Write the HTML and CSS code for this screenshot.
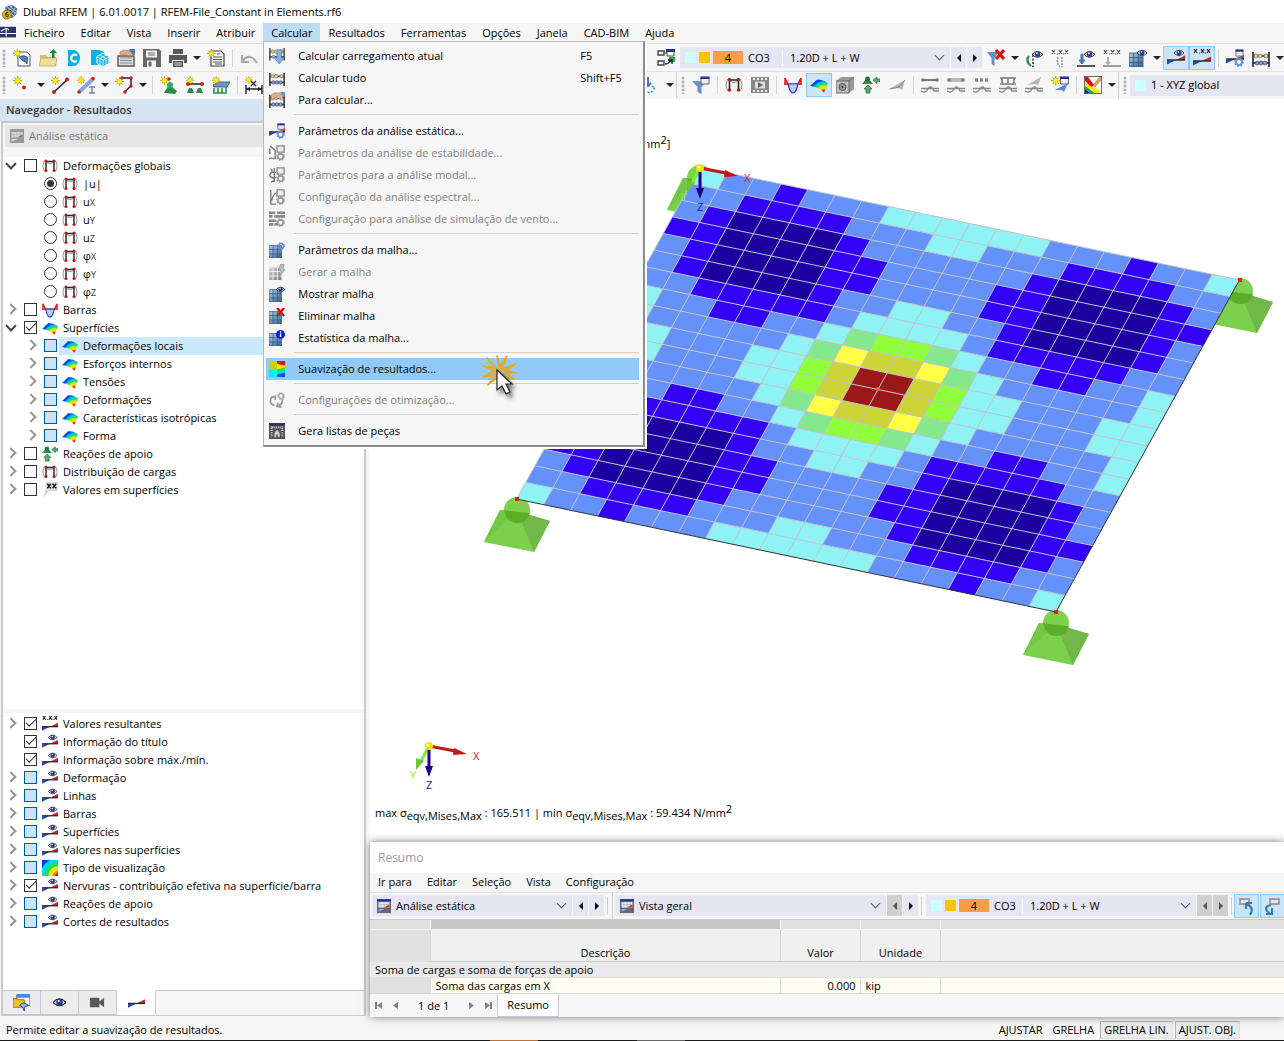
FILE: index.html
```html
<!DOCTYPE html>
<html lang="pt">
<head>
<meta charset="utf-8">
<title>Dlubal RFEM</title>
<link rel="stylesheet" href="styles.css">
</head>
<body>
<svg class="defs" aria-hidden="true">
  <defs>
    <linearGradient id="gSteel" x1="0" y1="0" x2="1" y2="1"><stop offset="0" stop-color="#a8d4ee"/><stop offset="1" stop-color="#3a5c8c"/></linearGradient>
    <linearGradient id="gGrey" x1="0" y1="0" x2="1" y2="1"><stop offset="0" stop-color="#d4d4d4"/><stop offset="1" stop-color="#808080"/></linearGradient>
    <radialGradient id="gRain" gradientUnits="userSpaceOnUse" cx="14" cy="17" r="16"><stop offset="0" stop-color="#d01000"/><stop offset=".15" stop-color="#f02000"/><stop offset=".3" stop-color="#ffe000"/><stop offset=".45" stop-color="#c0f000"/><stop offset=".55" stop-color="#20e060"/><stop offset=".68" stop-color="#00c8f0"/><stop offset=".82" stop-color="#0040e0"/><stop offset="1" stop-color="#0090c0"/></radialGradient>

    <symbol id="sun" viewBox="0 0 18 18"><path d="M5 0v10M0 5h10M1.500 1.500l7 7M8.500 1.500l-7 7" stroke="#a89820" stroke-width="1"/><circle cx="5" cy="5" r="2.800" fill="#ffee00" stroke="#d8b800" stroke-width=".6"/></symbol>
    <symbol id="eye" viewBox="0 0 18 18"><path d="M0 9Q9-1 18 9Q9 18 0 9z" fill="#eef" stroke="#223" stroke-width="1.600"/><circle cx="9" cy="8.500" r="4.500" fill="#2c3c96"/><circle cx="8" cy="7" r="1.500" fill="#fff"/></symbol>
    <symbol id="gear" viewBox="0 0 18 18"><circle cx="9" cy="9" r="5.500" fill="none" stroke="currentColor" stroke-width="3.500"/><circle cx="9" cy="9" r="7.500" fill="none" stroke="currentColor" stroke-width="2.500" stroke-dasharray="3 2.900"/></symbol>
    <symbol id="wedge" viewBox="0 0 18 18"><path d="M0 15.500V11.500L9 11z" fill="#2848b8"/><path d="M9 11L18 6.500v4.500z" fill="#d02818"/><path d="M0 11h18" stroke="#222" stroke-width="1.400"/></symbol>
    <symbol id="win" viewBox="0 0 18 18"><path d="M1 3h16v13H1z" fill="#eee" stroke="#666" stroke-width="2"/><path d="M0 1h18v5H0z" fill="#28308c"/></symbol>

    <symbol id="i-app" viewBox="0 0 18 18"><path d="M4 3l8-2 5 4-1 7-5 4-4-4-4-1z" fill="#48688c"/><path d="M5 3l10 7M8 2l8 6M4 6l9 7M12 1L6 9M15 4l-6 9M17 7l-5 8" stroke="#cde" stroke-width=".8"/><circle cx="5.500" cy="12" r="5" fill="#e0b820" stroke="#7a6410"/><path d="M7 9Q3.500 10 4 12.500T6.500 14T6 11.500T4 12.500" fill="none" stroke="#4a3c00" stroke-width="1.200"/></symbol>
    <symbol id="i-mdi" viewBox="0 0 18 18"><path d="M0 2h18v12H0z" fill="#2c3468"/><path d="M1 7q4-3 6-3t3 2M0 9.500h18M7 4v9" stroke="#fff" stroke-width="1.200" fill="none"/></symbol>
    <symbol id="i-new" viewBox="0 0 18 18"><path d="M5 3h9l3 3v11H5z" fill="#fff" stroke="#555"/><path d="M6 8q6-3 9 1l-1 6q-1-3-4-3z" fill="#5080b8" stroke="#234" stroke-width=".6"/><use href="#sun" width="15" height="15"/></symbol>
    <symbol id="i-open" viewBox="0 0 18 18"><path d="M1 17V6h6l2 2h8v9z" fill="#d8c070"/><path d="M0 17l2-8h16l-1.500 8z" fill="#f0dd98" stroke="#b8a050" stroke-width=".7"/><path d="M13 9V4h-2.500L14.500 0l3.500 4h-2.500v5z" fill="#189038"/></symbol>
    <symbol id="i-c1" viewBox="0 0 18 18"><path d="M3 1h7q5 3 5 8t-5 8H3z" fill="#00b4e4"/><path d="M12 6.500Q9 4.500 7 7t0 4.500T12 12" fill="none" stroke="#fff" stroke-width="2.200"/></symbol>
    <symbol id="i-c2" viewBox="0 0 18 18"><path d="M0 1h8q5 1 6 4v11H0z" fill="#00b4e4"/><path d="M12 4l6 3.500v7L12 18l-6-3.500v-7z" fill="#20b8e8" stroke="#fff"/><path d="M6 8l6 3 6-3M12 11v7M9 6l6 3.500v7M15 6L9 9.500v7" stroke="#fff" stroke-width=".8" fill="none"/></symbol>
    <symbol id="i-box" viewBox="0 0 18 18"><path d="M1 7h16v10H1z" fill="#ddd" stroke="#555" stroke-width="1.400"/><path d="M3 9h12M3 11.500h12M3 14h12" stroke="#888"/><path d="M3 3l4-2 8 1 2 4-6 1-3-2-5 2z" fill="#e0a880" stroke="#875" stroke-width=".6"/><path d="M12 0h6v6l-3-1z" fill="#4878b8"/></symbol>
    <symbol id="i-save" viewBox="0 0 18 18"><path d="M0 0h16l2 2v16H0z" fill="#686868"/><path d="M3 1.500h11v7H3zM4 11.500h9V18H4z" fill="#f4f4f4"/><path d="M5 4h7M5 6h7M6 13h2v4H6z" stroke="#686868" fill="#686868"/></symbol>
    <symbol id="i-print" viewBox="0 0 18 18"><path d="M4 0h10v5H4zM0 6h18v8h-3v-3H3v3H0zM4 12h10v6H4z" fill="#585858"/><path d="M5.500 14h7M5.500 16h7" stroke="#ddd"/></symbol>
    <symbol id="i-report" viewBox="0 0 18 18"><path d="M4 2h10l3 3v12H4z" fill="#fafafa" stroke="#444" stroke-width="1.200"/><path d="M6 8h9M6 10.500h9M6 13h9M8 15h7M10 5h3" stroke="#555"/><use href="#sun" width="16" height="16"/></symbol>
    <symbol id="i-undo" viewBox="0 0 18 18"><path d="M2 6v7h7M2.500 12Q10 3 17 14" fill="none" stroke="#aaa" stroke-width="2.200"/></symbol>
    <symbol id="i-node" viewBox="0 0 18 18"><use href="#sun" width="17" height="17"/><circle cx="11" cy="11.500" r="2" fill="#e01818"/></symbol>
    <symbol id="i-line" viewBox="0 0 18 18"><path d="M3 16L16 4" stroke="#222" stroke-width="1.600"/><circle cx="3" cy="16" r="2" fill="#e01818"/><circle cx="16" cy="3.500" r="2" fill="#e01818"/><use href="#sun" width="16" height="16"/></symbol>
    <symbol id="i-member" viewBox="0 0 18 18"><path d="M2 16L16 3" stroke="#88a8d8" stroke-width="4"/><circle cx="2" cy="16" r="1.800" fill="#e01818"/><circle cx="16" cy="2.500" r="1.800" fill="#e01818"/><path d="M12 11h6M15 11v6M12 17h6" stroke="#6888b0" stroke-width="1.500"/><use href="#sun" width="15" height="15"/></symbol>
    <symbol id="i-surf" viewBox="0 0 18 18"><path d="M6 2h10v8l-6 5.500" fill="none" stroke="#222" stroke-width="1.400"/><g fill="#e01818"><circle cx="7" cy="2" r="1.800"/><circle cx="16" cy="2" r="1.800"/><circle cx="16" cy="10" r="1.800"/><circle cx="10" cy="16" r="1.800"/></g><use href="#sun" y="1" width="16" height="16"/></symbol>
    <symbol id="i-support" viewBox="0 0 18 18"><path d="M4 17l4-7h3l6 5-2 3z" fill="#28904c"/><circle cx="10" cy="9" r="3" fill="#38a860"/><circle cx="9" cy="3" r="1.800" fill="#e01818"/><use href="#sun" width="16" height="16"/></symbol>
    <symbol id="i-lsup" viewBox="0 0 18 18"><path d="M2 8h14" stroke="#222" stroke-width="1.500"/><path d="M1 17l2-5h3l2 5zM10 17l2-5h3l2 5z" fill="#28904c"/><circle cx="2" cy="8" r="2" fill="#e01818"/><circle cx="16" cy="8" r="2" fill="#e01818"/><use href="#sun" width="15" height="15"/></symbol>
    <symbol id="i-ssup" viewBox="0 0 18 18"><path d="M1 9l6-3h11l-3 5H2z" fill="#6898c8" stroke="#468"/><path d="M2 12v5M6 12v5M10 12v5M14 11v5M1 17h14" stroke="#28904c" stroke-width="1.600"/><use href="#sun" width="15" height="15"/></symbol>
    <symbol id="i-dim" viewBox="0 0 18 18"><path d="M1 9v9M17 9v9M1 13h16M6 5l5 5M11 5l-5 5" stroke="#222" stroke-width="1.400"/><path d="M1 13l4-2v4zM17 13l-4-2v4z" fill="#222"/><use href="#sun" width="14" height="14"/></symbol>

    <symbol id="i-nav1" viewBox="0 0 18 18"><path d="M8 2h7v7H8z" fill="#eee" stroke="#444"/><path d="M6 0h10v4H6z" fill="#28308c"/><path d="M8 7h8v5H8z" fill="#20a840"/><path d="M8 12h5v4H8z" fill="#333"/></symbol>
    <symbol id="i-nav2" viewBox="0 0 18 18"><path d="M1 2h6v4H1zM1 12h6v4H1z" fill="#fff" stroke="#444" stroke-width="1.400"/><path d="M7 4h3" stroke="#444"/><path d="M10 1h7v6h-7z" fill="#fff" stroke="#444"/><path d="M9 0h9v3H9z" fill="#28308c"/><path d="M12 8h6v5h-6z" fill="#20a840"/><path d="M8 15q4 0 6-4M11 11h4v4" stroke="#222" fill="none" stroke-width="1.400"/></symbol>
    <symbol id="i-filterx" viewBox="0 0 18 18"><path d="M0 3h12L7.500 9v8l-3-2V9z" fill="#6890c8"/><path d="M9 1l8 9M17 1L9 10" stroke="#e01010" stroke-width="3"/></symbol>
    <symbol id="i-filter" viewBox="0 0 18 18"><path d="M0 5h15L9.500 11v7l-4-2v-5z" fill="#6890c8"/><use href="#win" x="8" width="10" height="9"/></symbol>
    <symbol id="i-defeye" viewBox="0 0 18 18"><path d="M4 7q-4 5 2 10" fill="none" stroke="#289048" stroke-width="2.200"/><path d="M8 6v12" stroke="#222" stroke-dasharray="2 1.500" stroke-width="1.400"/><use href="#eye" x="7" width="11" height="11"/></symbol>
    <symbol id="i-defx" viewBox="0 0 18 18"><path d="M7 8q-2 5 2 10M11 8v10" fill="none" stroke="#999" stroke-width="1.600" stroke-dasharray="2 1"/><path d="M1 1l3 4M4 1L1 5M8 1l3 4M11 1L8 5M14 1l3 4M17 1l-3 4M6 5h1M12 5h1" stroke="#444" stroke-width="1.100"/></symbol>
    <symbol id="i-ldeye" viewBox="0 0 18 18"><path d="M0 17h18" stroke="#333" stroke-width="1.600"/><path d="M4 5h2v6h2l-3 4-3-4h2z" fill="#4878b0" stroke="#4878b0"/><use href="#eye" x="7" width="11" height="11"/></symbol>
    <symbol id="i-ldx" viewBox="0 0 18 18"><path d="M0 17h18" stroke="#888" stroke-width="1.600"/><path d="M4 8v5h-2l3 3 3-3H6V8z" fill="#aaa"/><path d="M1 1l3 4M4 1L1 5M8 1l3 4M11 1L8 5M14 1l3 4M17 1l-3 4M6 5h1M12 5h1" stroke="#444" stroke-width="1.100"/></symbol>
    <symbol id="mesh" viewBox="0 0 18 18"><path d="M0 4h14v14H0z" fill="url(#gSteel)"/><path d="M4.500 4v14M9.500 4v14M0 8.500h14M0 13.500h14M0 4h14v14H0z" stroke="#38587c" stroke-width=".8" fill="none"/></symbol>
    <symbol id="i-mesheye" viewBox="0 0 18 18"><use href="#mesh"/><use href="#eye" x="8" y="-1" width="10" height="10"/></symbol>
    <symbol id="i-meshgear" viewBox="0 0 18 18"><use href="#mesh"/><use href="#gear" x="9" width="9" height="9" color="#6890e0"/></symbol>
    <symbol id="i-meshgen" viewBox="0 0 18 18"><path d="M0 4h14v14H0z" fill="url(#gGrey)"/><path d="M4.500 4v14M9.500 4v14M0 8.500h14M0 13.500h14" stroke="#f4f4f4"/><path d="M13 0h4l-1 6h2l-7 9 2-8h-2z" fill="#bbb" stroke="#888" stroke-width=".6"/></symbol>
    <symbol id="i-meshdel" viewBox="0 0 18 18"><use href="#mesh"/><path d="M9 0l8 9M17 0L9 9" stroke="#e01010" stroke-width="2.800"/></symbol>
    <symbol id="i-meshinfo" viewBox="0 0 18 18"><use href="#mesh"/><circle cx="13" cy="5" r="5" fill="#0818f0"/><path d="M13 4v4M13 1.500v1.500" stroke="#fff" stroke-width="1.600"/></symbol>
    <symbol id="i-reseye" viewBox="0 0 18 18"><use href="#wedge"/><use href="#eye" x="7" y="-1" width="10" height="10"/></symbol>
    <symbol id="i-resx" viewBox="0 0 18 18"><use href="#wedge" y="1"/><path d="M1 0l3 4M4 0L1 4M8 0l3 4M11 0L8 4M14 0l3 4M17 0l-3 4M6 4h1M12 4h1" stroke="#222" stroke-width="1.200"/></symbol>
    <symbol id="i-res" viewBox="0 0 18 18"><use href="#wedge" y="-1"/></symbol>
    <symbol id="i-calcset" viewBox="0 0 18 18"><use href="#wedge" y="-1"/><use href="#win" x="9" width="9" height="8"/><use href="#gear" x="8" y="8" width="10" height="10" color="#6890e0"/></symbol>
    <symbol id="i-abacus" viewBox="0 0 18 18"><path d="M1 3v15M17 3v15M1 7h16M1 14h16" stroke="#222" stroke-width="1.600"/><g fill="#d8c890" stroke="#665" stroke-width=".6"><circle cx="4" cy="7" r="2"/><circle cx="8" cy="7" r="2"/><circle cx="14" cy="7" r="2"/></g><g fill="#8898d0" stroke="#335" stroke-width=".6"><circle cx="5" cy="14" r="2"/><circle cx="9" cy="14" r="2"/><circle cx="13" cy="14" r="2"/></g></symbol>
    <symbol id="i-calc1" viewBox="0 0 18 18"><path d="M1 0v14M17 0v14M1 4h16M1 10h16" stroke="#222" stroke-width="1.400"/><g fill="#d8c890" stroke="#665" stroke-width=".6"><circle cx="4" cy="4" r="2"/><circle cx="8" cy="4" r="2"/><circle cx="14" cy="4" r="2"/></g><circle cx="5" cy="10" r="2" fill="#8898d0"/><path d="M9 2h5v9h3l-5.500 7L6 11h3z" fill="#88b0e0" stroke="#4070a8" stroke-width=".7"/></symbol>
    <symbol id="i-calc3" viewBox="0 0 18 18"><use href="#i-abacus"/><path d="M2 4l4-3 8 0 3 3-5 4-4-2-5 2z" fill="#e0b090" stroke="#875" stroke-width=".6"/><path d="M13 0h5v5l-3-1z" fill="#6890c8"/></symbol>
    <symbol id="i-def" viewBox="0 0 18 18"><path d="M4.500 13.500V4h9v9.500" fill="none" stroke="#222" stroke-width="1.600"/><path d="M2.500 3Q-.5 9 2.500 15M15.500 3q3 6 0 12M5.500 5.500q3.500 2 7 0" fill="none" stroke="#888" stroke-width="1"/><g fill="#c01818"><circle cx="4.500" cy="3.500" r="1.700"/><circle cx="13.500" cy="3.500" r="1.700"/><circle cx="4.500" cy="14" r="1.700"/><circle cx="13.500" cy="14" r="1.700"/></g></symbol>
    <symbol id="i-film" viewBox="0 0 18 18"><path d="M0 1h18v16H0z" fill="#888"/><path d="M2 3h14M2 15h14" stroke="#eee" stroke-width="2" stroke-dasharray="2 2"/><path d="M4 5.500h10v7H4z" fill="#ddd"/><path d="M7 6l5 3-5 3z" fill="#666"/></symbol>
    <symbol id="i-bar" viewBox="0 0 18 18"><path d="M0 8h18" stroke="#8090a8" stroke-width="1.600"/><path d="M4 8h10q-2 9-5 9T4 8z" fill="#b8ccf8" stroke="#2838d0" stroke-width="1.200"/><path d="M1 2v6h3zM17 2v6h-3z" fill="#fcc" stroke="#e01818" stroke-width="1.500"/></symbol>
    <symbol id="i-shell" viewBox="0 0 18 18"><path d="M0 10L7 3.500Q13 3.500 18 7L14 16.500Q9 11 0 10z" fill="url(#gRain)"/></symbol>
    <symbol id="i-cube" viewBox="0 0 18 18"><path d="M0 5l5-4h13v12l-5 4H0z" fill="#999"/><path d="M0 5h13v12H0z" fill="#c0c0c0" stroke="#666"/><path d="M13 5l5-4" stroke="#666"/><circle cx="6.500" cy="11" r="3.500" fill="#999" stroke="#555"/><circle cx="6.500" cy="11" r="1" fill="#333"/></symbol>
    <symbol id="i-react" viewBox="0 0 18 18"><path d="M0 8l4-5h3l4 5z" fill="#28904c"/><circle cx="5.500" cy="3" r="2.500" fill="#207840"/><path d="M4 17v-4H2l4-4 4 4H8v4zM18 5.500h-3v2l-4-3.500 4-3v2h3z" fill="#50b070" stroke="#207840" stroke-width=".8"/></symbol>
    <symbol id="i-plane" viewBox="0 0 18 18"><path d="M1 13L17 4l-3 10-3-2z" fill="#b4b4b4"/><path d="M2 13l9-2 6-7" stroke="#888" fill="none"/></symbol>
    <symbol id="wave" viewBox="0 0 18 18"><path d="M0 12.500h18M0 15q4 3 7-2t6 2l5 0" fill="none" stroke="#888" stroke-width="1.400"/></symbol>
    <symbol id="i-wave" viewBox="0 0 18 18"><path d="M2 4h14" stroke="#777" stroke-width="2"/><circle cx="2" cy="4" r="1.800" fill="#777"/><circle cx="16" cy="4" r="1.800" fill="#777"/><use href="#wave"/></symbol>
    <symbol id="i-wave2" viewBox="0 0 18 18"><path d="M2 4h14" stroke="#bbb" stroke-width="4"/><circle cx="2" cy="4" r="1.800" fill="#777"/><circle cx="16" cy="4" r="1.800" fill="#777"/><use href="#wave"/></symbol>
    <symbol id="i-wave5" viewBox="0 0 18 18"><path d="M2 4h14" stroke="#888" stroke-width="3.500" stroke-dasharray="3 2"/><use href="#wave"/></symbol>
    <symbol id="i-wave3" viewBox="0 0 18 18"><path d="M1 2h16M3 2v5M9 2v5M15 2v5M1 8h16" stroke="#777" stroke-width="1.600"/><use href="#wave"/></symbol>
    <symbol id="i-wave4" viewBox="0 0 18 18"><path d="M2 9L16 1l-3 8-3-1z" fill="#b4b4b4"/><use href="#wave"/></symbol>
    <symbol id="i-sect" viewBox="0 0 18 18"><path d="M4 14l13-7-4 9-2-2z" fill="#5088e8"/><use href="#win" x="9" width="9" height="9"/><use href="#sun" width="17" height="17"/></symbol>
    <symbol id="i-color" viewBox="0 0 18 18"><path d="M0 0h18v18H0z" fill="#fff" stroke="#333" stroke-width="1.400"/><path d="M1 1h3l6 8-3 3L1 5z" fill="#e01010"/><path d="M1 5l5 5L16 14v3h-4L1 10z" fill="#ffe800"/><path d="M1 10l10 7H6L1 13z" fill="#18b818"/><path d="M1 13l5 4H1z" fill="#0818e0"/><path d="M9 9L16 1l2 2-7 8z" fill="#e8a048" stroke="#864" stroke-width=".5"/></symbol>
    <symbol id="i-wp" viewBox="0 0 18 18"><path d="M-6 8L13 11L9 17L-8 13z" fill="none" stroke="#1890d0" stroke-width="1.400" stroke-dasharray="2 2"/><path d="M6 1v8M3 7l3 3 3-3" stroke="#4878b8" stroke-width="2" fill="none"/><circle cx="2" cy="6" r="3" fill="#ffee00" stroke="#c8a800"/></symbol>
    <symbol id="i-panel" viewBox="0 0 18 18"><path d="M0 0h18v18H0z" fill="#606878"/><path d="M0 0h18v3H0z" fill="#2c3c98"/><path d="M2 4h14v7H2z" fill="#f4f4f8"/><path d="M5 4v7M9 4v7M13 4v7M2 7h14" stroke="#aaa" stroke-width=".8"/><path d="M9 11l7-4v4z" fill="#e02818"/><path d="M2 16v-3h8z" fill="#88b0ff"/></symbol>
    <symbol id="i-panelg" viewBox="0 0 18 18"><path d="M0 0h18v18H0z" fill="#999"/><path d="M2 4h14v7H2z" fill="#ddd"/><path d="M5 4v7M9 4v7M13 4v7M2 7h14" stroke="#aaa" stroke-width=".8"/><path d="M9 11l7-4v4z" fill="#777"/><path d="M2 16v-3h8z" fill="#ddd"/></symbol>
    <symbol id="i-val" viewBox="0 0 18 18"><path d="M4 0h14v10H8L1 18l3-9z" fill="#d8d8d8"/><path d="M6 2l4 5M10 2L6 7M12 2l4 5M16 2l-4 5" stroke="#111" stroke-width="1.500"/></symbol>
    <symbol id="i-rainbow" viewBox="0 0 18 18"><path d="M0 0h18v18H0z" fill="#0040e0"/><circle cx="18" cy="18" r="20" fill="#00d8ff"/><circle cx="18" cy="18" r="15.500" fill="#20e050"/><circle cx="18" cy="18" r="11" fill="#f0f000"/><circle cx="18" cy="18" r="6" fill="#f08000"/><circle cx="18" cy="18" r="3" fill="#d01010"/></symbol>
    <symbol id="i-smooth" viewBox="0 0 18 18"><path d="M0 0h9v9H0z" fill="#c8d000"/><path d="M0 9h9v9H0z" fill="#00f4f4"/><path d="M9 0h9v18H9z" fill="#0050f0"/><path d="M9 0h9v13Q14 14 9 15z" fill="#00d8e8"/><path d="M9 0h9v10q-4 2-9 2z" fill="#30e020"/><path d="M9 0h9v7q-4 2-9 2z" fill="#f8f000"/><path d="M9 0h9v5Q14 5 9 3z" fill="#e01800"/></symbol>
    <symbol id="i-g1" viewBox="0 0 18 18"><path d="M1 1l6 5M7 6v10M1 4v6M0 16q3-3 6 0" stroke="#777" stroke-width="1.500" fill="none"/><path d="M9 1h8v7H9z" fill="#eee" stroke="#888" stroke-width="1.500"/><use href="#gear" x="8" y="8" width="10" height="10" color="#999"/></symbol>
    <symbol id="i-g2" viewBox="0 0 18 18"><path d="M2 2q3 2 0 5t2 5-2 5M6 1v16M2 6h6M2 12h6" stroke="#777" stroke-width="1.500" fill="none"/><path d="M9 1h8v7H9z" fill="#eee" stroke="#888" stroke-width="1.500"/><use href="#gear" x="8" y="8" width="10" height="10" color="#999"/></symbol>
    <symbol id="i-g3" viewBox="0 0 18 18"><path d="M2 1v16h6M3 13q2-9 7-9" stroke="#777" stroke-width="1.500" fill="none"/><path d="M9 1h8v7H9z" fill="#eee" stroke="#888" stroke-width="1.500"/><use href="#gear" x="8" y="8" width="10" height="10" color="#999"/></symbol>
    <symbol id="i-g4" viewBox="0 0 18 18"><path d="M0 2h7M9 2h9M0 6h4M6 6h12M0 11h8M0 15h5M6 15h4" stroke="#888" stroke-width="3"/><use href="#gear" x="8" y="8" width="10" height="10" color="#999"/></symbol>
    <symbol id="i-opt" viewBox="0 0 18 18"><path d="M3 6Q-1 13 6 15M2 6l5-1v4M9 16q7-1 6-9M10 12l-1 4 5 1" stroke="#999" stroke-width="2" fill="none"/><use href="#gear" x="9" width="9" height="9" color="#aaa"/></symbol>
    <symbol id="i-parts" viewBox="0 0 18 18"><path d="M0 0h18v18H0z" fill="#555"/><path d="M0 0h18v3H0z" fill="#2c3468"/><path d="M3 4v12M15 4v12M4 5h10" stroke="#ddd" stroke-width="2" stroke-dasharray="1 1"/><path d="M6 16v-4q3-8 6 0v4h-2v-3H8v3z" fill="#d0d0d0"/></symbol>
    <symbol id="i-data" viewBox="0 0 18 18"><path d="M4 1h14v11H4z" fill="#fff" stroke="#555"/><path d="M4 0h14v4H4z" fill="#4888e8"/><path d="M0 5h5l1 1h6v8H0z" fill="#f0c030" stroke="#987010"/><path d="M7 12q4-5 9 0l-4 2v4l-2-4z" fill="#88b8e0" stroke="#347"/></symbol>
    <symbol id="i-cam" viewBox="0 0 18 18"><path d="M1 4h10v10H1zM11 8l5-4v10l-5-4z" fill="#585858"/></symbol>
    <symbol id="i-sel1" viewBox="0 0 18 18"><path d="M2 2h9v5H2z" fill="#e4e4e4" stroke="#888" stroke-width="1.400"/><path d="M8 6v6M8 6h6M8 7q9 3 4 11" stroke="#3878b8" stroke-width="2.200" fill="none"/></symbol>
    <symbol id="i-sel2" viewBox="0 0 18 18"><path d="M6 2h9v5H6z" fill="#e4e4e4" stroke="#888" stroke-width="1.400"/><path d="M7 8q-9 2-2 8M8 11v6H2" stroke="#3878b8" stroke-width="2.200" fill="none"/></symbol>

    <!-- One quarter of the plate; the other three are mirror images of it -->
    <g id="quarter">
      <path fill="#6492fa" d="M0 0h10v10H0z"/>
      <path fill="#8ff3f4" d="M0 0h1v1H0zM7 0h3v1H7zM9 1h1v1H9zM9 5h1v1H9zM8 6h2v1H8zM0 7h1v3H0zM7 7h1v1H7zM6 8h1v1H6zM1 9h1v1H1zM5 9h2v1H5z"/>
      <path fill="#3200f5" d="M3 0h1v1H3zM2 1h4v1H2zM1 2h1v1H1zM6 2h1v1H6zM0 3h2v1H0zM6 3h2v2H6zM1 4h1v2H1zM6 5h1v1H6zM2 6h5v1H2zM3 7h2v1H3z"/>
      <path fill="#1c00a0" d="M2 2h4v4H2z"/>
      <path fill="#84e88e" d="M8 7h1v1H8zM7 8h1v1H7z"/>
      <path fill="#90ff3c" d="M9 7h1v1H9zM7 9h1v1H7z"/>
      <path fill="#ffff46" d="M8 8h1v1H8z"/>
      <path fill="#ccd437" d="M9 8h1v1H9zM8 9h1v1H8z"/>
      <path fill="#9c1818" d="M9 9h1v1H9z"/>
    </g>
    <g id="support">
      <path d="M-17 11L2 13L33 22L17 53L-33 43z" fill="#7bd04c"/>
      <path d="M0 12L33 22L17 53z" fill="#70b84a"/>
      <path d="M0 12L-33 43L-17 11z" fill="#72c846"/>
      <circle cy="11" r="13" fill="#70cc38" fill-opacity=".9"/>
      <path d="M-13 11Q0 14 13 14Q10 24 0 24T-13 11z" fill="#54a822" fill-opacity=".8"/>
    </g>
    <g id="triad">
      <path d="M0 0L26 5" stroke="#c01818" stroke-width="3"/><path d="M25 2L38 8L24 9z" fill="#c01818"/>
      <path d="M0 0L-8 15" stroke="#80f030" stroke-width="3"/><path d="M-13 12L-5 15L-13 24z" fill="#68c838"/>
      <path d="M0 0V22" stroke="#1c0090" stroke-width="3"/><path d="M-4 20H4L0 31z" fill="#1c0090"/>
      <circle r="4" fill="#f0e010"/><circle cx="-1" cy="-1" r="1.500" fill="#fffcb0"/>
      <text x="44" y="14" fill="#e02020">X</text><text x="-19" y="33" fill="#80f030">Y</text><text x="-3" y="43" fill="#2018a0">Z</text>
    </g>
  </defs>
</svg>

<header class="titlebar"><svg class="ic16"><use href="#i-app"/></svg><span>Dlubal RFEM | 6.01.0017 | RFEM-File_Constant in Elements.rf6</span></header>

<nav class="menubar">
  <svg class="ic16"><use href="#i-mdi"/></svg>
  <ul class="menus">
    <li><button>Ficheiro</button></li>
    <li><button>Editar</button></li>
    <li><button>Vista</button></li>
    <li><button>Inserir</button></li>
    <li><button>Atribuir</button></li>
    <li class="open"><button>Calcular</button>
      <ul class="dropdown">
        <li><button><svg><use href="#i-calc1"/></svg><span>Calcular carregamento atual</span><span>F5</span></button></li>
        <li><button><svg><use href="#i-abacus"/></svg><span>Calcular tudo</span><span>Shift+F5</span></button></li>
        <li><button><svg><use href="#i-calc3"/></svg><span>Para calcular...</span></button></li>
        <li class="sep"></li>
        <li><button><svg><use href="#i-calcset"/></svg><span>Parâmetros da análise estática...</span></button></li>
        <li><button disabled><svg><use href="#i-g1"/></svg><span>Parâmetros da análise de estabilidade...</span></button></li>
        <li><button disabled><svg><use href="#i-g2"/></svg><span>Parâmetros para a análise modal...</span></button></li>
        <li><button disabled><svg><use href="#i-g3"/></svg><span>Configuração da análise espectral...</span></button></li>
        <li><button disabled><svg><use href="#i-g4"/></svg><span>Configuração para análise de simulação de vento...</span></button></li>
        <li class="sep"></li>
        <li><button><svg><use href="#i-meshgear"/></svg><span>Parâmetros da malha...</span></button></li>
        <li><button disabled><svg><use href="#i-meshgen"/></svg><span>Gerar a malha</span></button></li>
        <li><button><svg><use href="#i-mesheye"/></svg><span>Mostrar malha</span></button></li>
        <li><button><svg><use href="#i-meshdel"/></svg><span>Eliminar malha</span></button></li>
        <li><button><svg><use href="#i-meshinfo"/></svg><span>Estatística da malha...</span></button></li>
        <li class="sep"></li>
        <li class="hot"><button><svg><use href="#i-smooth"/></svg><span>Suavização de resultados...</span></button>
          <svg class="pointer" viewBox="0 0 44 50">
            <path d="M17 16L4 2l8 10L0 10l11 5L0 21l12-2-7 10 10-8 3 6 1-7 12 3-8-6 10 0-11-3L33 8l-14 5L24 0l-7 11L14 0z" fill="#c8b050" fill-opacity=".6" stroke="#e8a818" stroke-width="1.600" stroke-linejoin="round"/>
            <path class="arrow" d="M14 14v20l5-4 4 8 4-2-4-8h6z" fill="#fff" stroke="#222" stroke-width="1.200"/>
          </svg></li>
        <li class="sep"></li>
        <li><button disabled><svg><use href="#i-opt"/></svg><span>Configurações de otimização...</span></button></li>
        <li class="sep"></li>
        <li><button><svg><use href="#i-parts"/></svg><span>Gera listas de peças</span></button></li>
      </ul>
    </li>
    <li><button>Resultados</button></li>
    <li><button>Ferramentas</button></li>
    <li><button>Opções</button></li>
    <li><button>Janela</button></li>
    <li><button>CAD-BIM</button></li>
    <li><button>Ajuda</button></li>
  </ul>
</nav>

<div class="toolbar">
  <div class="tools first">
    <i class="grip"></i>
    <button><svg><use href="#i-new"/></svg></button><button><svg><use href="#i-open"/></svg></button><button><svg><use href="#i-c1"/></svg></button><button><svg><use href="#i-c2"/></svg></button><button><svg><use href="#i-box"/></svg></button><button><svg><use href="#i-save"/></svg></button><button><svg><use href="#i-print"/></svg></button><button class="dd"></button><button><svg><use href="#i-report"/></svg></button><i class="sp"></i><button><svg><use href="#i-undo"/></svg></button>
  </div>
  <div class="tools">
    <button><svg><use href="#i-nav1"/></svg></button><button><svg><use href="#i-nav2"/></svg></button>
    <div class="combo load"><i class="sw cy"></i><i class="sw ye"></i><b class="num">4</b><span class="co">CO3</span><select aria-label="Combinação de cargas"><option>1.20D + L + W</option></select></div>
    <button class="step prev"></button><button class="step next"></button>
    <button><svg><use href="#i-filterx"/></svg></button><button class="dd"></button><button><svg><use href="#i-defeye"/></svg></button><button><svg><use href="#i-defx"/></svg></button><button><svg><use href="#i-ldeye"/></svg></button><button><svg><use href="#i-ldx"/></svg></button><button><svg><use href="#i-mesheye"/></svg></button><button class="dd"></button><button class="on"><svg><use href="#i-reseye"/></svg></button><button class="on"><svg><use href="#i-resx"/></svg></button><i class="sp"></i><button><svg><use href="#i-calcset"/></svg></button><button><svg><use href="#i-abacus"/></svg></button><button class="dd"></button>
  </div>
</div>

<div class="toolbar">
  <div class="tools second">
    <i class="grip"></i>
    <button><svg><use href="#i-node"/></svg></button><button class="dd"></button><button><svg><use href="#i-line"/></svg></button><button><svg><use href="#i-member"/></svg></button><button class="dd"></button><button><svg><use href="#i-surf"/></svg></button><button class="dd"></button><i class="sp"></i><button><svg><use href="#i-support"/></svg></button><button><svg><use href="#i-lsup"/></svg></button><button><svg><use href="#i-ssup"/></svg></button><i class="sp"></i><button><svg><use href="#i-dim"/></svg></button>
  </div>
  <div class="tools grow">
    <button><svg class="spill"><use href="#i-wp"/></svg></button><button class="dd"></button><i class="edge"></i><i class="grip"></i>
    <button><svg><use href="#i-filter"/></svg></button><i class="sp"></i><button><svg><use href="#i-def"/></svg></button><button><svg><use href="#i-film"/></svg></button><i class="sp"></i><button><svg><use href="#i-bar"/></svg></button><button class="on"><svg><use href="#i-shell"/></svg></button><button><svg><use href="#i-cube"/></svg></button><button><svg><use href="#i-react"/></svg></button><button><svg><use href="#i-plane"/></svg></button><i class="sp"></i><button><svg><use href="#i-wave"/></svg></button><button><svg><use href="#i-wave2"/></svg></button><button><svg><use href="#i-wave5"/></svg></button><button><svg><use href="#i-wave3"/></svg></button><button><svg><use href="#i-wave4"/></svg></button><button><svg><use href="#i-sect"/></svg></button><i class="sp"></i><button><svg><use href="#i-color"/></svg></button><button class="dd"></button><i class="edge"></i><i class="grip"></i>
    <div class="combo csys"><i class="sw cy"></i><select aria-label="Sistema de coordenadas"><option>1 - XYZ global</option></select></div>
  </div>
</div>

<main class="work">
  <aside class="navigator">
    <h2>Navegador - Resultados</h2>
    <div class="box">
      <div class="kind"><svg><use href="#i-panelg"/></svg><select disabled aria-label="Tipo de análise"><option>Análise estática</option></select></div>
      <ul class="tree top">
        <li><button class="tw down"></button><label><input type="checkbox"><span><svg><use href="#i-def"/></svg>Deformações globais</span></label></li>
        <li class="sub"><i class="tw"></i><label><input type="radio" name="u" checked><span><svg><use href="#i-def"/></svg>|u|</span></label></li>
        <li class="sub"><i class="tw"></i><label><input type="radio" name="u"><span><svg><use href="#i-def"/></svg>u<small>X</small></span></label></li>
        <li class="sub"><i class="tw"></i><label><input type="radio" name="u"><span><svg><use href="#i-def"/></svg>u<small>Y</small></span></label></li>
        <li class="sub"><i class="tw"></i><label><input type="radio" name="u"><span><svg><use href="#i-def"/></svg>u<small>Z</small></span></label></li>
        <li class="sub"><i class="tw"></i><label><input type="radio" name="u"><span><svg><use href="#i-def"/></svg>φ<small>X</small></span></label></li>
        <li class="sub"><i class="tw"></i><label><input type="radio" name="u"><span><svg><use href="#i-def"/></svg>φ<small>Y</small></span></label></li>
        <li class="sub"><i class="tw"></i><label><input type="radio" name="u"><span><svg><use href="#i-def"/></svg>φ<small>Z</small></span></label></li>
        <li><button class="tw right"></button><label><input type="checkbox"><span><svg><use href="#i-bar"/></svg>Barras</span></label></li>
        <li><button class="tw down"></button><label><input type="checkbox" checked><span><svg><use href="#i-shell"/></svg>Superfícies</span></label></li>
        <li class="sub sel"><button class="tw right"></button><label><input type="checkbox" class="part"><span><svg><use href="#i-shell"/></svg>Deformações locais</span></label></li>
        <li class="sub"><button class="tw right"></button><label><input type="checkbox" class="part"><span><svg><use href="#i-shell"/></svg>Esforços internos</span></label></li>
        <li class="sub"><button class="tw right"></button><label><input type="checkbox" class="part"><span><svg><use href="#i-shell"/></svg>Tensões</span></label></li>
        <li class="sub"><button class="tw right"></button><label><input type="checkbox" class="part"><span><svg><use href="#i-shell"/></svg>Deformações</span></label></li>
        <li class="sub"><button class="tw right"></button><label><input type="checkbox" class="part"><span><svg><use href="#i-shell"/></svg>Características isotrópicas</span></label></li>
        <li class="sub"><button class="tw right"></button><label><input type="checkbox" class="part"><span><svg><use href="#i-shell"/></svg>Forma</span></label></li>
        <li><button class="tw right"></button><label><input type="checkbox"><span><svg><use href="#i-react"/></svg>Reações de apoio</span></label></li>
        <li><button class="tw right"></button><label><input type="checkbox"><span><svg><use href="#i-def"/></svg>Distribuição de cargas</span></label></li>
        <li><button class="tw right"></button><label><input type="checkbox"><span><svg><use href="#i-val"/></svg>Valores em superfícies</span></label></li>
      </ul>
      <ul class="tree bottom">
        <li><button class="tw right"></button><label><input type="checkbox" checked><span><svg><use href="#i-resx"/></svg>Valores resultantes</span></label></li>
        <li><i class="tw"></i><label><input type="checkbox" checked><span><svg><use href="#i-reseye"/></svg>Informação do título</span></label></li>
        <li><i class="tw"></i><label><input type="checkbox" checked><span><svg><use href="#i-reseye"/></svg>Informação sobre máx./mín.</span></label></li>
        <li><button class="tw right"></button><label><input type="checkbox" class="part"><span><svg><use href="#i-reseye"/></svg>Deformação</span></label></li>
        <li><button class="tw right"></button><label><input type="checkbox" class="part"><span><svg><use href="#i-reseye"/></svg>Linhas</span></label></li>
        <li><button class="tw right"></button><label><input type="checkbox" class="part"><span><svg><use href="#i-reseye"/></svg>Barras</span></label></li>
        <li><button class="tw right"></button><label><input type="checkbox" class="part"><span><svg><use href="#i-reseye"/></svg>Superfícies</span></label></li>
        <li><button class="tw right"></button><label><input type="checkbox" class="part"><span><svg><use href="#i-reseye"/></svg>Valores nas superfícies</span></label></li>
        <li><button class="tw right"></button><label><input type="checkbox" class="part"><span><svg><use href="#i-rainbow"/></svg>Tipo de visualização</span></label></li>
        <li><button class="tw right"></button><label><input type="checkbox" checked><span><svg><use href="#i-reseye"/></svg>Nervuras - contribuição efetiva na superfície/barra</span></label></li>
        <li><button class="tw right"></button><label><input type="checkbox" class="part"><span><svg><use href="#i-reseye"/></svg>Reações de apoio</span></label></li>
        <li><button class="tw right"></button><label><input type="checkbox" class="part"><span><svg><use href="#i-reseye"/></svg>Cortes de resultados</span></label></li>
      </ul>
      <div class="tabs"><button><svg><use href="#i-data"/></svg></button><button><svg class="small"><use href="#eye"/></svg></button><button><svg><use href="#i-cam"/></svg></button><button class="cur"><svg><use href="#i-res"/></svg></button><i></i></div>
    </div>
  </aside>

  <section class="stage">
    <div class="view">
      <svg class="model">
        <g transform="translate(-370 -99)">
          <use href="#support" x="700" y="167"/><use href="#support" x="1240" y="280"/><use href="#support" x="517" y="499"/><use href="#support" x="1056" y="612"/>
          <g transform="matrix(26.97 5.65 -9.17 16.6 700 167)">
            <use href="#quarter"/><use href="#quarter" transform="matrix(-1 0 0 1 20 0)"/><use href="#quarter" transform="matrix(1 0 0 -1 0 20)"/><use href="#quarter" transform="matrix(-1 0 0 -1 20 20)"/>
            <path class="mesh" d="M0 0V20M1 0V20M2 0V20M3 0V20M4 0V20M5 0V20M6 0V20M7 0V20M8 0V20M9 0V20M10 0V20M11 0V20M12 0V20M13 0V20M14 0V20M15 0V20M16 0V20M17 0V20M18 0V20M19 0V20M0 0H20M0 1H20M0 2H20M0 3H20M0 4H20M0 5H20M0 6H20M0 7H20M0 8H20M0 9H20M0 10H20M0 11H20M0 12H20M0 13H20M0 14H20M0 15H20M0 16H20M0 17H20M0 18H20M0 19H20"/>
            <path class="rim" d="M20 0V20H0"/>
          </g>
          <circle cx="878" cy="389" r="2" fill="#e07028"/>
          <path d="M1238 278h4v4h-4zM515 497h4v4h-4zM1054 610h4v4h-4z" fill="#e02020"/>
          <use href="#triad" x="700" y="168"/><use href="#triad" x="429" y="746"/>
        </g>
      </svg>
      <p class="unit">mm<sup>2</sup>]</p>
      <p class="extremes">max σ<sub>eqv,Mises,Max</sub> : 165.511 | min σ<sub>eqv,Mises,Max</sub> : 59.434 N/mm<sup>2</sup></p>
    </div>

    <section class="summary">
      <h3>Resumo</h3>
      <nav><button>Ir para</button><button>Editar</button><button>Seleção</button><button>Vista</button><button>Configuração</button></nav>
      <div class="bar">
        <div class="combo an"><svg><use href="#i-panel"/></svg><select aria-label="Análise"><option>Análise estática</option></select></div>
        <button class="step prev"></button><button class="step next"></button><i class="edge"></i><i class="edge tall"></i>
        <div class="combo vg"><svg><use href="#i-panel"/></svg><select aria-label="Vista"><option>Vista geral</option></select></div>
        <button class="step prev off"></button><button class="step next"></button><i class="edge"></i>
        <div class="combo load"><i class="sw cy"></i><i class="sw ye"></i><b class="num">4</b><span class="co">CO3</span><select aria-label="Combinação"><option>1.20D + L + W</option></select></div>
        <button class="step prev off"></button><button class="step next off"></button><i class="edge"></i>
        <button class="tool on"><svg><use href="#i-sel1"/></svg></button><button class="tool on"><svg><use href="#i-sel2"/></svg></button>
      </div>
      <table>
        <colgroup><col class="c0"><col class="c1"><col class="c2"><col class="c2"><col></colgroup>
        <thead>
          <tr class="strip"><td></td><td class="act"></td><td></td><td></td><td></td></tr>
          <tr class="head"><td class="rh"></td><th>Descrição</th><th>Valor</th><th>Unidade</th><th></th></tr>
        </thead>
        <tbody>
          <tr class="group"><td colspan="5">Soma de cargas e soma de forças de apoio</td></tr>
          <tr class="data"><td class="rh"></td><td>Soma das cargas em X</td><td class="r">0.000</td><td>kip</td><td></td></tr>
        </tbody>
      </table>
      <div class="pages"><button class="pg"><svg viewBox="0 0 9 9"><path d="M1 1h2v7H1zM8 1v7L3 4.500z"/></svg></button><button class="pg"><svg viewBox="0 0 9 9"><path d="M7 1v7L2 4.500z"/></svg></button><span>1 de 1</span><button class="pg"><svg viewBox="0 0 9 9"><path d="M2 1v7l5-3.500z"/></svg></button><button class="pg"><svg viewBox="0 0 9 9"><path d="M1 1v7l5-3.500zM6 1h2v7H6z"/></svg></button><button class="page">Resumo</button></div>
    </section>
  </section>
</main>

<footer class="status"><span class="hint">Permite editar a suavização de resultados.</span><button>AJUSTAR</button><button>GRELHA</button><button class="in">GRELHA LIN.</button><button class="in">AJUST. OBJ.</button></footer>
</body>
</html>
```
FILE: styles.css
```css
* { box-sizing: border-box; }
body { margin: 0; min-height: 100vh; display: flex; flex-direction: column; background: #f6f6f6; color: #000; font: 11px/16px "Open Sans", "Noto Sans", sans-serif; }
ul { list-style: none; margin: 0; padding: 0; }
button, select, input { font: inherit; color: inherit; margin: 0; }
button { border: 0; padding: 0; background: none; white-space: nowrap; }
svg { display: block; flex: none; }
.defs { position: absolute; width: 0; height: 0; }
.ic16 { width: 16px; height: 16px; }

.titlebar { height: 23px; display: flex; align-items: center; gap: 5px; padding-left: 2px; background: #fff; }
.menubar { height: 21px; display: flex; align-items: center; border-bottom: 1px solid #dedede; }
.menus { display: flex; height: 20px; }
.menus > li { position: relative; }
.menus > li > button { height: 20px; padding: 0 8px; }
.menus > .open > button { background: #bcdcf4; }

.dropdown { position: absolute; z-index: 5; left: 0; top: 18px; width: 382px; padding: 3px 4px 3px 2px; border: 1px solid #b8b8b8; border-right: 2px solid #8c8c8c; border-bottom: 2px solid #8c8c8c; background: #f6f6f6; box-shadow: 2px 2px 0 #fff; }
.dropdown li { position: relative; }
.dropdown button { width: 100%; height: 22px; display: grid; grid-template-columns: 16px 269px 1fr; gap: 13px; align-items: center; padding-left: 3px; text-align: left; }
.dropdown svg { width: 16px; height: 16px; }
.dropdown button:disabled { color: #808080; }
.dropdown .sep { height: 9px; padding: 3px 0 0 28px; }
.dropdown .sep::before { content: ""; display: block; height: 1px; background: #d0d0d0; }
.dropdown .hot { background: #91c9f7; }
.dropdown .pointer { position: absolute; z-index: 6; left: 217px; top: -2px; width: 44px; height: 50px; overflow: visible; }
.arrow { filter: drop-shadow(3px 4px 2px rgba(0, 0, 0, .5)); }

.toolbar { height: 28px; display: flex; overflow: hidden; border-bottom: 1px solid #e0e0e0; }
.toolbar + .toolbar { height: 27px; border-bottom-color: #f6f6f6; }
.tools { display: flex; align-items: center; flex: none; }
.first { width: 627px; }
.second { width: 638px; }
.grow { flex: 1 1 0; }
.tools > button, .tool { flex: none; width: 26px; height: 24px; display: flex; align-items: center; justify-content: center; }
.tools svg, .tool svg { width: 18px; height: 18px; }
.tools > .on, .tool.on { background: #cce4f7; border: 1px solid #90c8f6; }
.tools > .dd { width: 12px; }
.dd::before { content: ""; border: 4px solid transparent; border-top-color: #222; border-bottom: 0; }
.grip { flex: none; width: 9px; height: 18px; background: radial-gradient(circle, #b4b4b4 1px, transparent 2px) 1px 0 / 6px 4px repeat-y; }
.sp { flex: none; width: 7px; height: 18px; background: linear-gradient(#d4d4d4, #d4d4d4) center / 1px 100% no-repeat; }
.edge { flex: none; width: 3px; height: 26px; border-left: 1px solid #d0d0d0; }

.combo { flex: none; height: 21px; display: flex; align-items: center; background: #e6e6f2; position: relative; }
.combo::after { content: ""; position: absolute; right: 7px; top: 5px; width: 6px; height: 6px; border: solid #555; border-width: 0 1px 1px 0; transform: rotate(45deg); }
.combo select { flex: 1; min-width: 0; appearance: none; border: 0; background: none; padding: 0; }
.combo svg { width: 14px; height: 14px; margin: 0 5px 0 5px; }
.load { width: 270px; margin: 0 1px; padding-left: 5px; gap: 3px; }
.csys { flex: 1; margin-right: -20px; padding-left: 5px; gap: 5px; }
.sw { width: 11px; height: 11px; }
.cy { background: #ccffff; }
.ye { background: #f8c400; }
.num { width: 30px; height: 13px; line-height: 13px; font-weight: 400; text-align: center; background: #f89c48; }
.co { width: 35px; margin: 0 4px 0 2px; border-right: 1px solid #fff; }
.bar .load { margin-left: 2px; }
.bar .co { width: 29px; }
.step { flex: none; width: 15px; height: 21px; margin-right: 1px; background: #e6e6f2; display: flex; align-items: center; justify-content: center; }
.tools > .step { width: 15px; height: 21px; }
.step::before { content: ""; border: 4px solid transparent; border-width: 4px 0 4px 4px; border-left-color: #000; }
.step.prev::before { border-width: 4px 4px 4px 0; border-right-color: #000; }
.step.off { background: #cfcfcf; }
.step.off::before { opacity: .6; }

.work { flex: 1; display: flex; min-height: 0; }
.navigator { flex: none; width: 370px; display: flex; flex-direction: column; padding-right: 4px; }
.navigator h2 { margin: 0; height: 22px; padding-left: 6px; font-size: 11px; line-height: 22px; font-weight: 600; color: #333; background: #d6e4f2; }
.box { flex: 1; display: flex; flex-direction: column; margin-left: 1px; border: 2px solid #c8c8d4; border-bottom-width: 1px; margin-bottom: 2px; }
.kind { height: 22px; margin: 2px 2px 10px; display: flex; align-items: center; gap: 5px; padding-left: 5px; background: #e5e5e5; }
.kind svg { width: 14px; height: 14px; }
.kind select { appearance: none; border: 0; background: none; padding: 0; color: #777; opacity: 1; flex: 1; }
.tree { background: #fff; }
.tree.top { flex: 1; }
.tree.bottom { flex: 0 0 281px; border-top: 4px solid #f6f6f6; padding-top: 2px; }
.tree li { height: 18px; display: flex; align-items: center; }
.tree .sub { padding-left: 20px; }
.tw { flex: none; width: 16px; height: 18px; margin-right: 5px; display: flex; align-items: center; justify-content: center; }
.tw.right::before, .tw.down::before { content: ""; width: 6px; height: 6px; border: solid #999; border-width: 2px 2px 0 0; transform: rotate(45deg); margin-bottom: 2px; }
.tw.down::before { border-color: #444; transform: rotate(135deg); margin-bottom: 4px; }
.tree label { flex: 1; display: flex; align-items: center; gap: 2px; }
.tree label span { flex: 1; height: 18px; display: flex; align-items: center; padding-left: 3px; line-height: 18px; }
.tree label svg { width: 16px; height: 16px; margin-right: 5px; }
.tree small { font-size: 9px; color: #333; padding-top: 1px; }
.sel label span { background: #cce8ff; }
.tree input { appearance: none; flex: none; width: 13px; height: 13px; margin-bottom: 2px; border: 1px solid #333; background: #fff; display: flex; align-items: center; justify-content: center; }
.tree input.part { border-color: #0058a8; background: #cce4f7; }
.tree input[type=checkbox]:checked::after { content: ""; width: 9px; height: 4px; border: solid #333; border-width: 0 0 1px 1px; transform: rotate(-45deg); margin-top: -3px; }
.tree input[type=radio] { border-radius: 50%; }
.tree input[type=radio]:checked::after { content: ""; width: 7px; height: 7px; border-radius: 50%; background: #333; }
.tabs { height: 25px; display: flex; background: #f6f6f6; }
.tabs button { width: 38px; display: flex; align-items: center; justify-content: center; background: #ececec; border: solid #c8c8d4; border-width: 1px 1px 1px 0; }
.tabs .cur { width: 39px; background: #fff; border-top-color: #fff; border-bottom-color: #fff; }
.tabs i { flex: 1; border-top: 1px solid #c8c8d4; }
.tabs svg { width: 17px; height: 17px; }
.tabs .small { width: 13px; height: 13px; }

.stage { flex: 1; min-width: 0; display: flex; flex-direction: column; }
.view { flex: 1; position: relative; overflow: hidden; background: #fff; }
.model { position: absolute; inset: 0; width: 100%; height: 100%; font-size: 11px; }
.mesh { fill: none; stroke: #c4c4cc; stroke-width: 1px; vector-effect: non-scaling-stroke; }
.rim { fill: none; stroke: #333; stroke-width: 1px; vector-effect: non-scaling-stroke; }
.view p { position: absolute; margin: 0; white-space: nowrap; }
.view sub, .view sup { font-size: 11px; line-height: 1px; }
.view sub { vertical-align: -3px; }
.view sup { vertical-align: 4px; }
.unit { left: 270px; top: 37px; }
.extremes { left: 5px; bottom: 21px; }

.summary { flex: none; background: #f6f6f6; overflow: hidden; margin-bottom: 1px; box-shadow: 0 0 8px #777; position: relative; }
.summary h3 { margin: 0; height: 31px; padding-left: 8px; font-size: 12px; line-height: 31px; font-weight: 400; color: #999; background: #fff; }
.summary nav { height: 20px; display: flex; align-items: center; gap: 15px; padding-left: 8px; border-bottom: 1px solid #e0e0e0; }
.bar { height: 27px; display: flex; align-items: center; padding-left: 2px; border-bottom: 1px solid #c8c8d4; }
.an { width: 200px; margin-right: 1px; }
.vg { width: 271px; margin-right: 1px; }
.bar .edge { height: 18px; margin-left: 2px; }
.bar .tall { height: 26px; }
.tool { width: 25px; margin-right: 1px; }
table { width: 100%; border-collapse: collapse; table-layout: fixed; }
td, th { padding: 0 4px 0 5px; font-weight: 400; border-right: 1px solid #d8d8d8; white-space: nowrap; }
td:last-child, th:last-child { border-right: 0; }
.c0 { width: 60px; }
.c1 { width: 350px; }
.c2 { width: 80px; }
.strip td { height: 10px; background: #e0e0e0; border-color: #fff; border-bottom: 1px solid #f4f4f4; }
.strip .act { background: #c6c6c6; }
.head th { height: 32px; background: #f0f0f0; vertical-align: bottom; border-bottom: 1px solid #ccc; }
.group td { height: 16px; background: #eaeaea; line-height: 15px; }
.data td { height: 16px; background: #fffcf2; line-height: 15px; border-bottom: 1px solid #d8d8d8; border-top: 1px solid #e0e0e0; }
.head .rh, .data .rh { background: #e0e0e0; }
.r { text-align: right; }
.pages { height: 23px; display: flex; align-items: center; }
.pg { width: 17px; height: 20px; display: flex; align-items: center; justify-content: center; }
.pg svg { width: 9px; height: 9px; fill: #808080; }
.pages span { margin: 0 14px; }
.page { height: 23px; padding: 0 9px; background: #fff; border: 1px solid #c8c8d4; border-top: 0; }

.status { height: 23px; display: flex; align-items: center; gap: 2px; padding: 0 44px 0 6px; background: linear-gradient(90deg, #1c1c1c 490px, #c07030 490px, #c07030 538px, #1c1c1c 538px, #1c1c1c 637px, #666 637px, #666 685px, #1c1c1c 685px) bottom / 100% 1px no-repeat; }
.hint { flex: 1; }
.status button { height: 18px; padding: 0 4px; }
.status .in { border: 1px solid #b0b0b0; border-right-color: #ddd; border-bottom-color: #ddd; background: #ececec; padding: 0 3px; }
```
